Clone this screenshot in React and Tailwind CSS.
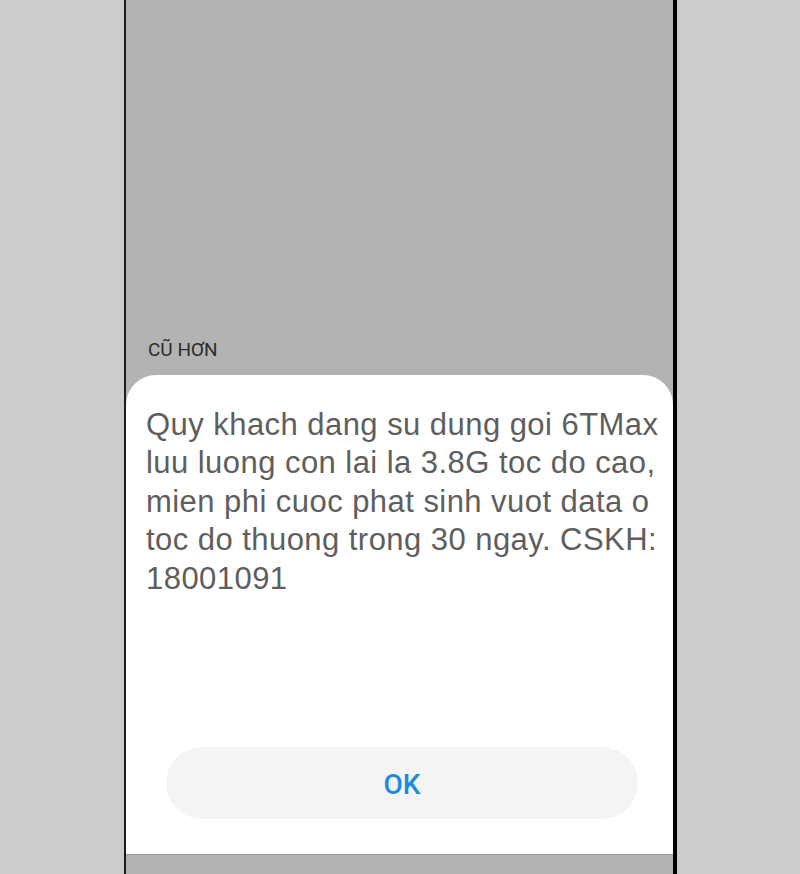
export default function App() {
  const lines = [
    "Quy khach dang su dung goi 6TMax",
    "luu luong con lai la 3.8G toc do cao,",
    "mien phi cuoc phat sinh vuot data o",
    "toc do thuong trong 30 ngay. CSKH:",
    "18001091",
  ];
  return (
    <div className="w-[800px] h-[874px] bg-[#cccccc] overflow-hidden">
      <div className="ml-[124px] w-[553px] h-[874px] border-l-2 border-r-4 border-l-[#1c1c1c] border-r-black bg-[#b3b3b3] flex flex-col">
        <div className="h-[375px] shrink-0 pt-[339px] pl-[22px]">
          <div className="text-[19px] leading-[22px] text-[#2b2b2b] font-['Roboto',sans-serif]">
            CŨ HƠN
          </div>
        </div>
        <div className="h-[480px] shrink-0 bg-white rounded-t-[30px] flex flex-col pt-[31px] pb-[35px] border-b border-b-[#9a9a9a]">
          <div className="pl-[20px] text-[31px] leading-[38.4px] tracking-[0.45px] text-[#5e5e5e] font-['Liberation_Sans',Arial,sans-serif]">
            {lines.map((l) => (
              <div key={l} className="whitespace-nowrap">
                {l}
              </div>
            ))}
          </div>
          <div className="mt-auto ml-[40px] w-[472px] h-[72px] rounded-full bg-[#f4f4f4] flex items-center justify-center pt-[4px]">
            <span className="text-[28px] font-medium text-[#1b8cd8] font-['Roboto',sans-serif]">
              OK
            </span>
          </div>
        </div>
      </div>
    </div>
  );
}
